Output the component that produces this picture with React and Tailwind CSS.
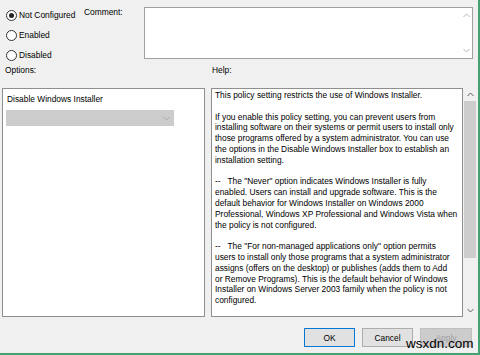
const helpLines = [
  'This policy setting restricts the use of Windows Installer.',
  '',
  'If you enable this policy setting, you can prevent users from',
  'installing software on their systems or permit users to install only',
  'those programs offered by a system administrator. You can use',
  'the options in the Disable Windows Installer box to establish an',
  'installation setting.',
  '',
  '--   The "Never" option indicates Windows Installer is fully',
  'enabled. Users can install and upgrade software. This is the',
  'default behavior for Windows Installer on Windows 2000',
  'Professional, Windows XP Professional and Windows Vista when',
  'the policy is not configured.',
  '',
  '--   The "For non-managed applications only" option permits',
  'users to install only those programs that a system administrator',
  'assigns (offers on the desktop) or publishes (adds them to Add',
  'or Remove Programs). This is the default behavior of Windows',
  'Installer on Windows Server 2003 family when the policy is not',
  'configured.',
]

function Radio({ label, checked }) {
  return (
    <div className="flex items-center h-[12px] gap-[2px]">
      <span className="w-[11px] h-[11px] rounded-full border border-[#333] bg-white flex items-center justify-center">
        {checked && <span className="w-[5px] h-[5px] rounded-full bg-[#222]" />}
      </span>
      <span>{label}</span>
    </div>
  )
}

function Chevron({ up, color = '#606060', className = '' }) {
  return (
    <svg width="7" height="5" viewBox="0 0 7 5" className={className} fill="none">
      <path d={up ? 'M0.5 4L3.5 1L6.5 4' : 'M0.5 1L3.5 4L6.5 1'} stroke={color} strokeWidth="1" />
    </svg>
  )
}

function Button({ children, primary, disabled }) {
  const border = primary ? 'border-[#0078d7]' : disabled ? 'border-[#bfbfbf]' : 'border-[#adadad]'
  const bg = disabled ? 'bg-[#cccccc] text-[#a0a0a0]' : 'bg-[#e1e1e1] text-black'
  return (
    <div className={`h-[19px] border ${border} ${bg} flex items-center justify-center`} style={{ width: disabled ? 52 : 51 }}>
      {children}
    </div>
  )
}

export default function App() {
  return (
    <div className="relative w-[480px] h-[355px] bg-[#f0f0f0] border-r-2 border-b-2 border-[#47a06f] font-['Liberation_Sans',Arial,sans-serif] text-[8.4px] leading-[12px] text-black overflow-hidden">
      {/* top row */}
      <div className="flex h-[61px]">
        <div className="w-[84px] pl-[6px] pt-[9px] flex flex-col gap-[8px]">
          <Radio label="Not Configured" checked />
          <Radio label="Enabled" />
          <Radio label="Disabled" />
        </div>
        <div className="w-[60px] pt-[6px]">Comment:</div>
        <div className="mt-[7px] w-[329px] h-[52px] border border-[#a0a0a0] bg-white flex justify-end">
          <div className="w-[12px] flex flex-col justify-between items-center py-[5px]">
            <Chevron up color="#b4b4b4" />
            <Chevron color="#b4b4b4" />
          </div>
        </div>
      </div>

      {/* labels */}
      <div className="flex h-[27px] pt-[3px]">
        <div className="w-[212px] pl-[5px]">Options:</div>
        <div>Help:</div>
      </div>

      {/* panels */}
      <div className="flex h-[229px] pl-[2px]">
        <div className="w-[203px] border border-[#8f8f8f] bg-white px-[3px] pt-[4px]">
          <div className="pl-[1px]">Disable Windows Installer</div>
          <div className="mt-[5px] w-[168px] h-[16px] bg-[#cccccc] flex items-center justify-end pr-[4px]">
            <Chevron color="#a8a8a8" />
          </div>
        </div>
        <div className="ml-[6px] w-[252px] border border-[#8f8f8f] bg-white pl-[3px] pt-[1px] leading-[10.8px] whitespace-pre">
          {helpLines.map((l, i) => (
            <div key={i} className="h-[10.8px]">{l}</div>
          ))}
        </div>
        <div className="w-[14px] flex flex-col items-center">
          <div className="h-[13px] flex items-center">
            <Chevron up />
          </div>
          <div className="w-[12px] h-[157px] bg-[#cdcdcd]" />
          <div className="flex-1" />
          <div className="h-[13px] flex items-center">
            <Chevron />
          </div>
        </div>
      </div>

      {/* buttons */}
      <div className="flex justify-end gap-[7px] pr-[6px] mt-[11px]">
        <Button primary>OK</Button>
        <Button>Cancel</Button>
        <Button disabled>Apply</Button>
      </div>

      <div className="absolute left-[406px] top-[336px] text-[13.5px] leading-[16px] text-black">wsxdn.com</div>
    </div>
  )
}
